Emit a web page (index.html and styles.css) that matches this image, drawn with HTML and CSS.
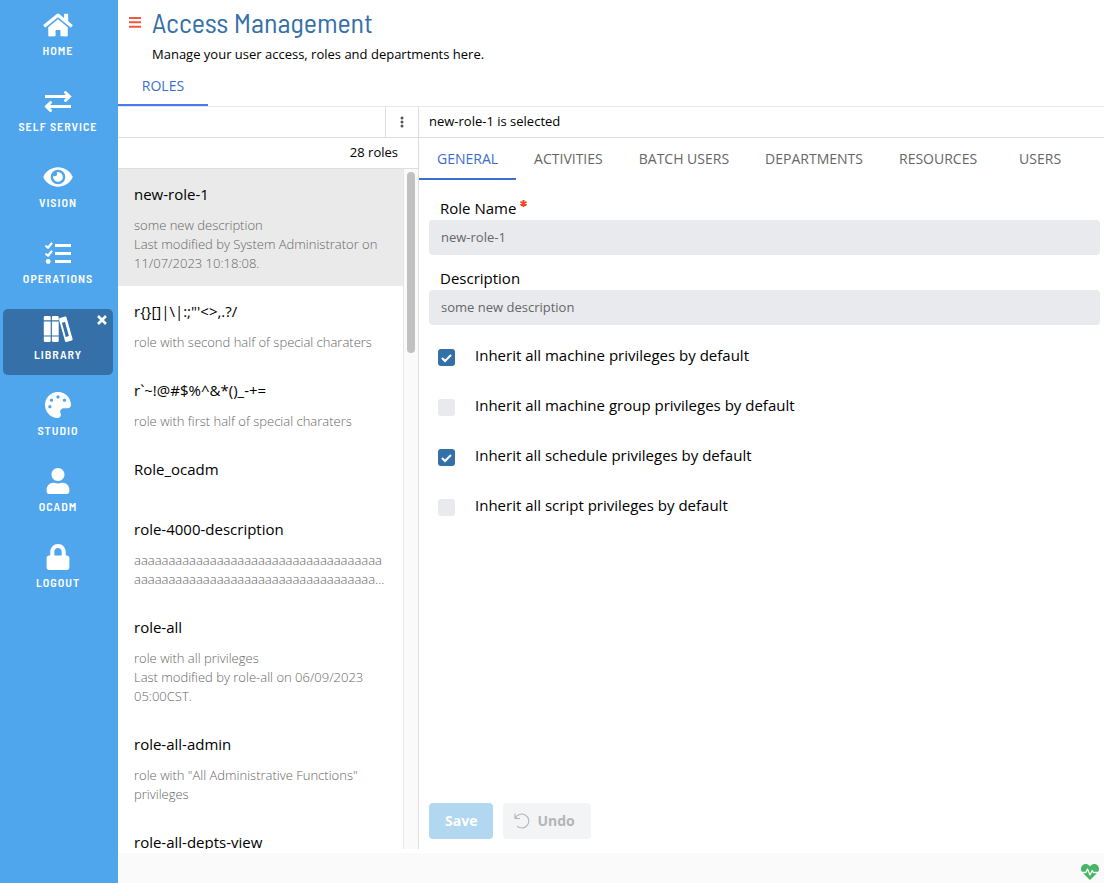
FILE: index.html
```html
<!DOCTYPE html>
<html lang="en">
<head>
<meta charset="utf-8">
<meta name="viewport" content="width=device-width, initial-scale=1">
<title>Access Management</title>
<link rel="stylesheet" href="styles.css">
</head>
<body>
<div class="app">
  <nav class="sidebar" aria-label="Main">
    <a class="nav-item" href="#home">
      <svg class="nav-icon" viewBox="0 0 576 512" aria-hidden="true"><path d="M280.37 148.26L96 300.11V464a16 16 0 0 0 16 16l112.06-.29a16 16 0 0 0 15.92-16V368a16 16 0 0 1 16-16h64a16 16 0 0 1 16 16v95.64a16 16 0 0 0 16 16.05L464 480a16 16 0 0 0 16-16V300L295.67 148.26a12.19 12.19 0 0 0-15.3 0zM571.6 251.47L488 182.56V44.05a12 12 0 0 0-12-12h-56a12 12 0 0 0-12 12v72.61L318.47 43a48 48 0 0 0-61 0L4.34 251.47a12 12 0 0 0-1.6 16.9l25.5 31A12 12 0 0 0 45.15 301l235.22-193.74a12.19 12.19 0 0 1 15.3 0L530.9 301a12 12 0 0 0 16.9-1.6l25.5-31a12 12 0 0 0-1.7-16.93z"/></svg>
      <span>HOME</span>
    </a>
    <a class="nav-item" href="#self-service">
      <svg class="nav-icon" viewBox="0 0 30 26" aria-hidden="true"><g fill="none" stroke="currentColor" stroke-width="3"><path d="M2 8.500H27M28 18.500H3"/><path stroke-linecap="round" d="M22.500 4.500L26.500 8.500L22.500 12.500M7.500 14.500L3.500 18.500L7.500 22.500"/></g></svg>
      <span>SELF SERVICE</span>
    </a>
    <a class="nav-item" href="#vision">
      <svg class="nav-icon" viewBox="0 0 576 512" aria-hidden="true"><path d="M572.52 241.4C518.29 135.59 410.93 64 288 64S57.68 135.64 3.480 241.410a32.350 32.350 0 0 0 0 29.190C57.710 376.410 165.070 448 288 448s230.320-71.640 284.520-177.410a32.350 32.350 0 0 0 0-29.190zM288 400a144 144 0 1 1 144-144 143.930 143.930 0 0 1-144 144zm0-240a95.310 95.310 0 0 0-25.310 3.790 47.850 47.850 0 0 1-66.900 66.900A95.780 95.780 0 1 0 288 160z"/></svg>
      <span>VISION</span>
    </a>
    <a class="nav-item" href="#operations">
      <svg class="nav-icon" viewBox="0 0 30 26" aria-hidden="true"><path d="M12 4h16v3H12zM12 12h16v3H12zM12 20h16v3H12z"/><circle cx="5.200" cy="21.500" r="2.400"/><path fill="none" stroke="currentColor" stroke-width="2.200" stroke-linecap="round" stroke-linejoin="round" d="M3.200 6.200L5 7.800L8.500 3.500M3.200 14.200L5 15.800L8.500 11.500"/></svg>
      <span>OPERATIONS</span>
    </a>
    <div class="nav-slot">
      <a class="nav-item nav-item-active" href="#library" aria-current="page">
        <svg class="nav-icon" viewBox="0 0 30 26" aria-hidden="true"><path d="M2 0h4.500a1.200 1.200 0 0 1 1.200 1.200V4.200H.8V1.200A1.200 1.200 0 0 1 2 0zM.8 5.400h6.900v14H.8zM.8 20.600h6.900v4.200A1.200 1.200 0 0 1 6.500 26H2a1.200 1.200 0 0 1-1.200-1.200zM10 0h4.500a1.200 1.200 0 0 1 1.200 1.200V4.200H8.900V1.200A1.200 1.200 0 0 1 10 0zM8.900 5.400h6.800v14H8.900zM8.900 20.600h6.800v4.200a1.200 1.200 0 0 1-1.200 1.200H10a1.200 1.200 0 0 1-1.100-1.200z"/><path fill-rule="evenodd" d="M16.200 2.200L22 .6a1.200 1.200 0 0 1 1.500.9L29.600 23a1.200 1.200 0 0 1-.8 1.400L23.500 26a1.200 1.200 0 0 1-1.500-.9L16.200 4.500zM18.900 6.700l3.900 14.200 3.100-.8L22 5.900z"/></svg>
        <span>LIBRARY</span>
      </a>
      <button class="nav-close" type="button" aria-label="Close library"><svg viewBox="0 0 10 10" aria-hidden="true"><path fill="none" stroke="currentColor" stroke-width="2.600" d="M1 1L9 9M9 1L1 9"/></svg></button>
    </div>
    <a class="nav-item" href="#studio">
      <svg class="nav-icon" viewBox="0 0 512 512" aria-hidden="true"><path d="M204.300 5C104.900 24.400 24.800 104.300 5.200 203.400c-37 187 131.700 326.400 258.800 306.700 41.200-6.400 61.400-54.600 42.500-91.700-23.100-45.400 9.900-98.400 60.900-98.400h79.700c35.800 0 64.800-29.600 64.900-65.300C511.500 97.100 368.100-26.900 204.300 5zM96 320c-17.700 0-32-14.300-32-32s14.300-32 32-32 32 14.300 32 32-14.300 32-32 32zm32-128c-17.700 0-32-14.300-32-32s14.300-32 32-32 32 14.300 32 32-14.300 32-32 32zm128-64c-17.700 0-32-14.300-32-32s14.300-32 32-32 32 14.300 32 32-14.300 32-32 32zm128 64c-17.700 0-32-14.300-32-32s14.300-32 32-32 32 14.300 32 32-14.300 32-32 32z"/></svg>
      <span>STUDIO</span>
    </a>
    <a class="nav-item" href="#ocadm">
      <svg class="nav-icon" viewBox="0 0 448 512" aria-hidden="true"><path d="M224 256c70.700 0 128-57.300 128-128S294.700 0 224 0 96 57.300 96 128s57.300 128 128 128zm89.600 32h-16.700c-22.200 10.200-46.900 16-72.900 16s-50.600-5.800-72.900-16h-16.700C60.200 288 0 348.200 0 422.400V464c0 26.500 21.500 48 48 48h352c26.500 0 48-21.500 48-48v-41.600c0-74.200-60.200-134.400-134.400-134.400z"/></svg>
      <span>OCADM</span>
    </a>
    <a class="nav-item" href="#logout">
      <svg class="nav-icon" viewBox="0 0 448 512" aria-hidden="true"><path d="M400 224h-24v-72C376 68.200 307.800 0 224 0S72 68.200 72 152v72H48c-26.500 0-48 21.500-48 48v192c0 26.500 21.500 48 48 48h352c26.500 0 48-21.500 48-48V272c0-26.500-21.500-48-48-48zm-104 0H152v-72c0-39.700 32.300-72 72-72s72 32.300 72 72v72z"/></svg>
      <span>LOGOUT</span>
    </a>
  </nav>

  <div class="page">
    <header class="page-header">
      <button class="menu-button" type="button" aria-label="Toggle menu"><svg viewBox="0 0 12 12" aria-hidden="true"><path stroke="currentColor" stroke-width="2" d="M0 2H12M0 6.300H12M0 10.700H12"/></svg></button>
      <div class="heading">
        <h1 class="title">Access Management</h1>
        <p class="subtitle">Manage your user access, roles and departments here.</p>
      </div>
    </header>
    <div class="tabs page-tabs" role="tablist">
      <button class="tab tab-selected tab-bright" type="button" role="tab" aria-selected="true">ROLES</button>
    </div>

    <main class="workspace">
      <section class="roles" aria-label="Roles">
        <div class="roles-toolbar">
          <button class="more-button" type="button" aria-label="More options"><svg viewBox="0 0 4 12" aria-hidden="true"><circle cx="2" cy="2" r="1.500"/><circle cx="2" cy="6" r="1.500"/><circle cx="2" cy="10" r="1.500"/></svg></button>
        </div>
        <div class="roles-count">28 roles</div>
        <div class="roles-body">
          <ul class="role-list">
            <li class="role role-selected"><h2 class="role-name">new-role-1</h2><p class="role-text">some new description<br>Last modified by System Administrator on 11/07/2023 10:18:08.</p></li>
            <li class="role"><h2 class="role-name">r{}[]|\|:;"'&lt;&gt;,.?/</h2><p class="role-text">role with second half of special charaters</p></li>
            <li class="role"><h2 class="role-name">r`~!@#$%^&amp;*()_-+=</h2><p class="role-text">role with first half of special charaters</p></li>
            <li class="role"><h2 class="role-name">Role_ocadm</h2><p class="role-text"></p></li>
            <li class="role"><h2 class="role-name">role-4000-description</h2><p class="role-text role-text-clamped">aaaaaaaaaaaaaaaaaaaaaaaaaaaaaaaaaaaaaaaaaaaaaaaaaaaaaaaaaaaaaaaaaaaaaaaaaaaaaaaaaaaaaaaaaaaaaaaaaaaa</p></li>
            <li class="role"><h2 class="role-name">role-all</h2><p class="role-text">role with all privileges<br>Last modified by role-all on 06/09/2023 05:00CST.</p></li>
            <li class="role"><h2 class="role-name">role-all-admin</h2><p class="role-text">role with "All Administrative Functions" privileges</p></li>
            <li class="role"><h2 class="role-name">role-all-depts-view</h2><p class="role-text"></p></li>
          </ul>
          <div class="scroll-track" aria-hidden="true"><div class="scroll-thumb"></div></div>
        </div>
      </section>

      <section class="detail" aria-label="Role details">
        <div class="detail-status">new-role-1 is selected</div>
        <div class="tabs" role="tablist">
          <button class="tab tab-selected" type="button" role="tab" aria-selected="true">GENERAL</button>
          <button class="tab" type="button" role="tab" aria-selected="false">ACTIVITIES</button>
          <button class="tab" type="button" role="tab" aria-selected="false">BATCH USERS</button>
          <button class="tab" type="button" role="tab" aria-selected="false">DEPARTMENTS</button>
          <button class="tab" type="button" role="tab" aria-selected="false">RESOURCES</button>
          <button class="tab" type="button" role="tab" aria-selected="false">USERS</button>
        </div>
        <form class="role-form">
          <div class="field">
            <label class="field-label" for="role-name">Role Name <svg class="required" viewBox="0 0 8 8" aria-hidden="true"><path stroke="currentColor" stroke-width="2.200" d="M4 0V8M.5 2L7.500 6M7.500 2L.5 6"/></svg></label>
            <input class="field-input" id="role-name" type="text" value="new-role-1" readonly>
          </div>
          <div class="field">
            <label class="field-label" for="role-description">Description</label>
            <input class="field-input" id="role-description" type="text" value="some new description" readonly>
          </div>
          <div class="options">
            <label class="option"><input class="check" type="checkbox" checked><span>Inherit all machine privileges by default</span></label>
            <label class="option"><input class="check" type="checkbox"><span>Inherit all machine group privileges by default</span></label>
            <label class="option"><input class="check" type="checkbox" checked><span>Inherit all schedule privileges by default</span></label>
            <label class="option"><input class="check" type="checkbox"><span>Inherit all script privileges by default</span></label>
          </div>
          <div class="actions">
            <button class="button button-save" type="submit" disabled>Save</button>
            <button class="button button-undo" type="reset" disabled><svg class="undo-icon" viewBox="0 0 16 16" aria-hidden="true"><path fill="none" stroke="currentColor" stroke-width="1.100" d="M1 .5V5.500H6M1.300 5.300A7 7 0 1 1 3 13.200"/></svg>Undo</button>
          </div>
        </form>
      </section>
    </main>

    <footer class="footer">
      <svg class="health" viewBox="0 0 18 16" role="img" aria-label="Server status: healthy"><path fill="#48b564" d="M9 16L1.400 8.500C-.5 6.500-.4 3.100 1.500 1.300 3.500-.5 6.600-.3 8.400 1.700L9 2.400l.6-.7C11.400-.3 14.500-.5 16.500 1.300c1.900 1.800 2 5.200.1 7.200z"/><path fill="none" stroke="#fff" stroke-width="1.300" stroke-linejoin="round" d="M0 8.500H4.800L6.500 5L9 11L11.200 6.500L12.300 8.500H18"/></svg>
    </footer>
  </div>
</div>
</body>
</html>
```

FILE: styles.css
```css
* {
  box-sizing: border-box;
}

body {
  margin: 0;
  background: #fff;
  color: #000;
  font-family: "Open Sans", "Noto Sans", sans-serif;
  font-size: 13px;
}

h1, h2, p, ul {
  margin: 0;
  padding: 0;
  font-weight: 400;
}

button {
  margin: 0;
  padding: 0;
  border: 0;
  background: none;
  color: inherit;
  font: inherit;
  cursor: pointer;
}

svg {
  fill: currentColor;
}

.app {
  display: flex;
  height: 100vh;
}

/* Sidebar */

.sidebar {
  display: flex;
  flex: none;
  flex-direction: column;
  gap: 10px;
  width: 118px;
  padding: 5px 5px 5px 3px;
  background: #50a6ed;
}

.nav-slot {
  position: relative;
}

.nav-item {
  display: flex;
  flex-direction: column;
  align-items: center;
  gap: 4px;
  height: 66px;
  padding-top: 7px;
  border-radius: 5px;
  color: #fff;
  font-family: "Barlow Semi Condensed", Roboto, sans-serif;
  font-size: 12px;
  font-weight: 600;
  line-height: 16px;
  letter-spacing: 1px;
  text-decoration: none;
}

.nav-item-active {
  background: #3570a9;
}

.nav-icon {
  width: 30px;
  height: 26px;
}

.nav-close {
  position: absolute;
  top: 6px;
  right: 6px;
  width: 10px;
  height: 10px;
  color: #fff;
}

.nav-close svg,
.menu-button svg {
  display: block;
}

/* Page header */

.page {
  display: flex;
  flex: 1;
  flex-direction: column;
  min-width: 0;
}

.page-header {
  display: flex;
  gap: 11px;
  padding: 6px 11px 0;
}

.menu-button {
  width: 12px;
  height: 12px;
  margin-top: 10px;
  color: #f2583e;
}

.title {
  color: #3570a9;
  font-family: "Barlow Semi Condensed", Roboto, sans-serif;
  font-size: 28px;
  line-height: 32px;
}

.subtitle {
  margin-top: 7px;
  line-height: 18px;
}

.tabs {
  display: flex;
  flex: none;
}

.page-tabs {
  padding-top: 1px;
  border-bottom: 1px solid #e6e6e6;
}

.tab {
  min-width: 90px;
  height: 42px;
  padding: 0 18px;
  border-bottom: 2px solid transparent;
  color: #666;
  font-size: 14px;
  white-space: nowrap;
}

.tab-selected {
  border-color: #3c6dd0;
  color: #3c6dd0;
}

.tab-bright {
  padding-top: 2px;
  border-color: #4a7bee;
}

/* Workspace */

.workspace {
  display: flex;
  flex: 1;
  min-height: 0;
  padding-bottom: 4px;
}

.roles {
  display: flex;
  flex: none;
  flex-direction: column;
  width: 301px;
  border-right: 1px solid #dedede;
}

.roles-toolbar {
  display: flex;
  flex: none;
  justify-content: flex-end;
  height: 31px;
  border-bottom: 1px solid #dedede;
}

.more-button {
  display: flex;
  align-items: center;
  justify-content: center;
  width: 33px;
  border-left: 1px solid #dedede;
  color: #555;
}

.more-button svg {
  width: 4px;
  height: 12px;
}

.roles-count {
  flex: none;
  padding: 0 20px 2px;
  border-bottom: 1px solid #dedede;
  line-height: 28px;
  text-align: right;
}

.roles-body {
  display: flex;
  flex: 1;
  min-height: 0;
}

.role-list {
  flex: 1;
  min-width: 0;
  overflow: hidden;
  list-style: none;
}

.role {
  padding: 15px 16px 13px;
}

.role-selected {
  background: #eaeaea;
}

.role-name {
  margin-bottom: 12px;
  font-size: 15px;
  line-height: 20px;
}

.role-text {
  color: #666;
  font-weight: 300;
  line-height: 19px;
}

.role-text-clamped {
  display: -webkit-box;
  overflow: hidden;
  -webkit-box-orient: vertical;
  -webkit-line-clamp: 2;
  word-break: break-all;
}

.scroll-track {
  width: 15px;
  padding: 3px 3px 0;
  border-left: 1px solid #e6e6e6;
  background: #fafafa;
}

.scroll-thumb {
  width: 8px;
  height: 181px;
  border-radius: 4px;
  background: #c1c1c1;
}

/* Role details */

.detail {
  display: flex;
  flex: 1;
  flex-direction: column;
  min-width: 0;
}

.detail-status {
  flex: none;
  padding: 0 10px 2px;
  border-bottom: 1px solid #dedede;
  line-height: 28px;
}

.role-form {
  display: flex;
  flex: 1;
  flex-direction: column;
  padding: 17px 4px 10px 10px;
}

.field {
  margin-bottom: 12px;
}

.field-label {
  display: block;
  padding: 0 0 1px 11px;
  font-size: 15px;
  line-height: 22px;
}

.required {
  width: 7px;
  height: 7px;
  color: #f0421c;
  vertical-align: 7px;
}

.field-input {
  display: block;
  width: 100%;
  height: 35px;
  padding: 0 12px 2px;
  border: 0;
  border-radius: 4px;
  outline: 0;
  background: #e9eaee;
  color: #666;
  font: inherit;
}

.options {
  margin-top: -7px;
}

.option {
  display: flex;
  align-items: center;
  gap: 20px;
  height: 50px;
  padding-left: 9px;
  font-size: 15px;
}

.check {
  flex: none;
  width: 17px;
  height: 17px;
  margin: 4px 0 0;
  border-radius: 3px;
  appearance: none;
  background: #e9eaee;
}

.check:checked {
  background: #3570a9 url("data:image/svg+xml,%3Csvg xmlns='http://www.w3.org/2000/svg' viewBox='0 0 17 17'%3E%3Cpath d='M4 9l3 3 6-6' fill='none' stroke='white' stroke-width='2'/%3E%3C/svg%3E") center / 17px 17px no-repeat;
}

.actions {
  display: flex;
  gap: 10px;
  margin-top: auto;
}

.button {
  display: flex;
  align-items: center;
  justify-content: center;
  gap: 7px;
  height: 36px;
  padding: 0 16px 1px;
  border-radius: 4px;
  font-size: 14px;
  font-weight: 700;
}

.button-save {
  background: #b2d7f0;
  color: #fff;
}

.button-undo {
  padding-left: 11px;
  background: #f3f4f6;
  color: #b5b5b5;
}

.undo-icon {
  width: 16px;
  height: 16px;
}

.footer {
  display: flex;
  flex: none;
  align-items: flex-end;
  justify-content: flex-end;
  height: 30px;
  padding: 0 5px 3px;
  background: #fafafa;
}

.health {
  width: 18px;
  height: 16px;
}
```
